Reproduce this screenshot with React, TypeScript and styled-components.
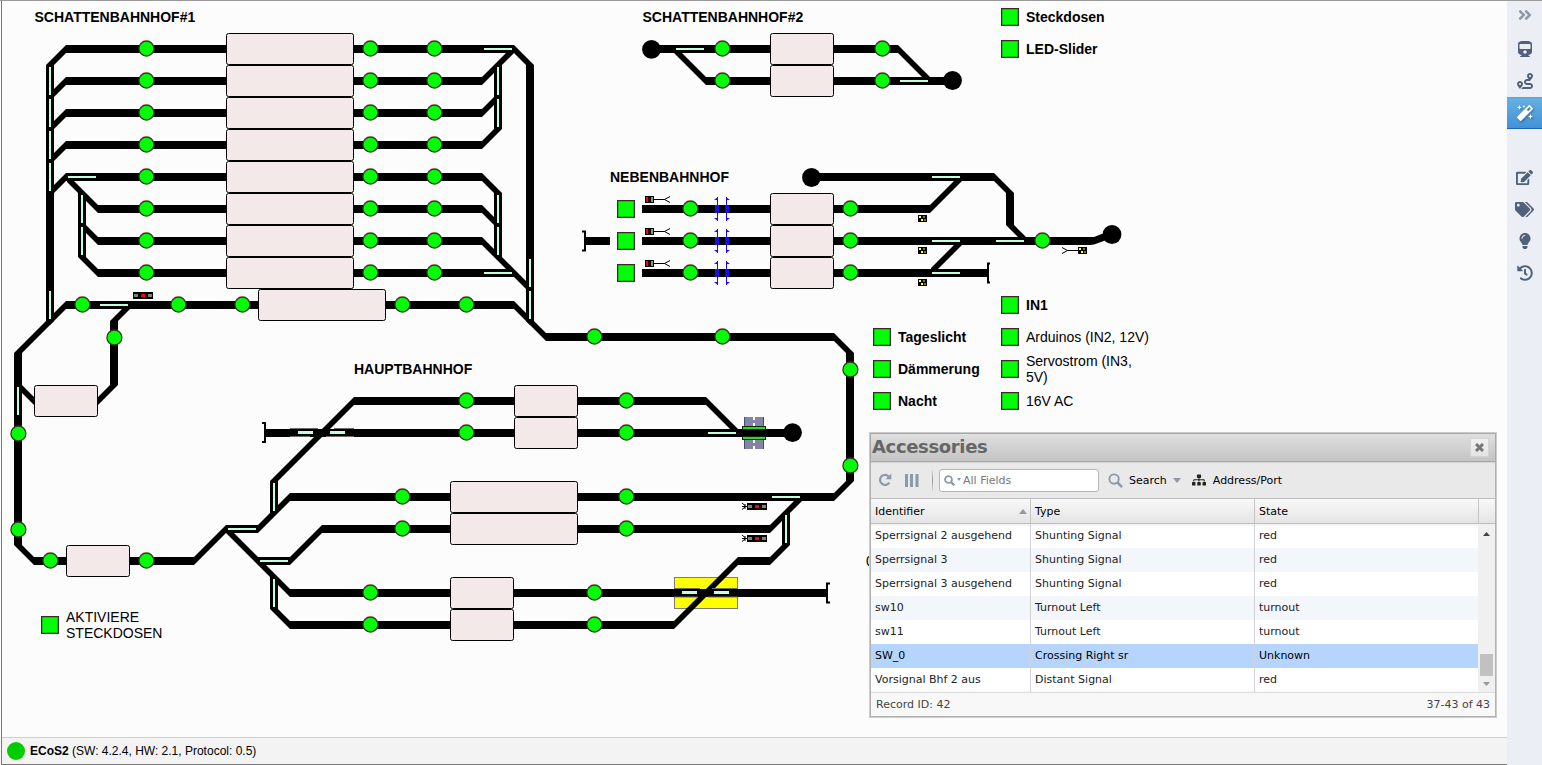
import React from "react";
import styled, { createGlobalStyle, css } from "styled-components";
import {
  FaAngleDoubleRight,
  FaTrain,
  FaRoute,
  FaMagic,
  FaEdit,
  FaTags,
  FaLightbulb,
  FaHistory,
  FaSitemap,
} from "react-icons/fa";

const GlobalStyle = createGlobalStyle`
  * { box-sizing: border-box; }
  body { margin: 0; background: #fff; overflow: hidden; }
`;

/* ---------- page frame ---------- */

const Page = styled.div`
  display: flex;
  width: 1542px;
  height: 765px;
  padding-left: 1px;
  border-top: 1px solid #9a9a9a;
  font-family: "Liberation Sans", Arial, sans-serif;
  color: #000;
`;

const Main = styled.main`
  display: flex;
  flex-direction: column;
  flex: 1;
  border-left: 1px solid #777;
  border-bottom: 1px solid #777;
`;

const Canvas = styled.section`
  position: relative;
  flex: 1;
  background: #fcfcfc;
  overflow: hidden;
`;

const StatusBar = styled.footer`
  display: flex;
  align-items: center;
  height: 27px;
  padding-left: 5px;
  gap: 5px;
  background: #f3f3f3;
  border-top: 1px solid #cfcfcf;
  font-size: 12px;
  white-space: pre;
`;

const StatusDot = styled.span`
  width: 18px;
  height: 18px;
  border-radius: 50%;
  background: #00cc00;
`;

const Sidebar = styled.nav`
  display: flex;
  flex-direction: column;
  width: 35px;
  background: #ebeef4;
`;

const SideButton = styled.button<{ $active?: boolean; $size?: number }>`
  display: flex;
  align-items: center;
  justify-content: center;
  height: 32px;
  padding: 0;
  border: 0;
  background: none;
  color: #4f627a;
  font-size: ${(p) => p.$size ?? 16}px;
  ${(p) =>
    p.$active &&
    css`
      color: #fff;
      background: linear-gradient(#66b0e3, #4292d6);
      border-bottom: 1px solid #1d63b5;
      border-top: 1px solid #5aa2d8;
      svg { filter: drop-shadow(1px 1px 1px rgba(0, 0, 0, 0.35)); }
    `}
`;

const SideToggle = styled(SideButton)`
  height: 28px;
  margin-bottom: 4px;
  color: #8d99a7;
`;

const SideGap = styled.div`
  height: 32px;
`;

/* ---------- layout canvas ---------- */

const Drawing = styled.svg`
  position: absolute;
  left: -2px;
  top: -1px;
`;

const Label = styled.span<{ $x: number; $y: number; $bold?: boolean; $ls?: number }>`
  position: absolute;
  left: ${(p) => p.$x - 2}px;
  top: ${(p) => p.$y - 1}px;
  font-size: 14px;
  line-height: 16px;
  letter-spacing: ${(p) => p.$ls ?? 0}px;
  font-weight: ${(p) => (p.$bold ? 700 : 400)};
  white-space: pre;
`;

const Switch = styled.button<{ $x: number; $y: number }>`
  position: absolute;
  left: ${(p) => p.$x - 2}px;
  top: ${(p) => p.$y - 1}px;
  width: 18px;
  height: 18px;
  padding: 0;
  border: 1px solid #3a2a2a;
  background: #00ff00;
  box-shadow: inset 0 0 0 0.5px #1c8a1c;
`;

type Pt = [number, number];

const TRACKS: Pt[][] = [
  // Schattenbahnhof 1, left ladder
  [[226, 49], [66, 49], [50, 65], [50, 321], [18, 353], [18, 545], [34, 561], [66, 561]],
  [[50, 97], [66, 81], [226, 81]],
  [[50, 129], [66, 113], [226, 113]],
  [[50, 161], [66, 145], [226, 145]],
  [[50, 193], [66, 177], [226, 177]],
  [[67, 178], [98, 209], [226, 209]],
  [[82, 225], [98, 241], [226, 241]],
  [[82, 193], [82, 257], [98, 273], [226, 273]],
  [[50, 321], [66, 305], [258, 305]],
  [[130, 305], [114, 321], [114, 385], [98, 401]],
  [[18, 385], [34, 401]],
  // right ladder and main loop
  [[354, 49], [514, 49], [530, 65], [530, 321], [546, 337], [834, 337], [850, 353], [850, 481], [834, 497], [578, 497]],
  [[354, 81], [482, 81], [514, 49]],
  [[354, 113], [482, 113], [498, 97]],
  [[354, 145], [482, 145], [498, 129], [498, 65]],
  [[354, 177], [482, 177], [498, 193], [498, 257]],
  [[354, 209], [482, 209], [498, 225]],
  [[354, 241], [482, 241], [530, 289]],
  [[354, 273], [514, 273]],
  [[386, 305], [514, 305], [530, 321]],
  // Hauptbahnhof
  [[130, 561], [194, 561], [226, 529], [258, 529], [290, 497], [450, 497]],
  [[274, 513], [274, 481], [354, 401], [514, 401]],
  [[226, 529], [290, 593], [450, 593]],
  [[258, 561], [290, 561], [322, 529], [450, 529]],
  [[274, 577], [274, 609], [290, 625], [450, 625]],
  [[266, 433], [514, 433]],
  [[578, 401], [706, 401], [738, 433]],
  [[578, 433], [786, 433]],
  [[578, 529], [770, 529], [802, 497]],
  [[786, 513], [786, 545], [770, 561], [738, 561], [674, 625], [514, 625]],
  [[514, 593], [827, 593]],
  // Schattenbahnhof 2
  [[651, 49], [770, 49]],
  [[674, 49], [706, 81], [770, 81]],
  [[834, 49], [898, 49], [930, 81]],
  [[834, 81], [952, 81]],
  // Nebenbahnhof
  [[811, 177], [994, 177], [1010, 193], [1010, 225], [1026, 241]],
  [[642, 209], [770, 209]],
  [[642, 241], [770, 241]],
  [[642, 273], [770, 273]],
  [[834, 209], [930, 209], [962, 177]],
  [[834, 241], [1091, 241]],
  [[834, 273], [987, 273]],
  [[931, 272], [962, 241]],
  [[585, 241], [610, 241]],
];

const W = 4;

/* Outline of one piece of track; diagonals are cut flush with the piece they meet. */
function pieces(pts: Pt[]): string {
  const isDiag = (i: number) =>
    i >= 0 && i < pts.length - 1 && pts[i][0] !== pts[i + 1][0] && pts[i][1] !== pts[i + 1][1];
  const isVert = (i: number) => i >= 0 && i < pts.length - 1 && pts[i][0] === pts[i + 1][0];
  let d = "";
  for (let i = 0; i < pts.length - 1; i++) {
    const [x1, y1] = pts[i];
    const [x2, y2] = pts[i + 1];
    if (isDiag(i)) {
      const s = (y2 - y1) / (x2 - x1) > 0 ? 1 : -1;
      const a: Pt = isVert(i - 1) ? [s * W, 0] : [0, -W];
      const b: Pt = isVert(i + 1) ? [s * W, 0] : [0, -W];
      d += `M${x1 + a[0]} ${y1 + a[1]}L${x2 + b[0]} ${y2 + b[1]}L${x2 - b[0]} ${y2 - b[1]}L${x1 - a[0]} ${y1 - a[1]}Z`;
    } else if (isVert(i)) {
      d += `M${x1 - W} ${y1}L${x1 + W} ${y1}L${x2 + W} ${y2}L${x2 - W} ${y2}Z`;
    } else {
      d += `M${x1} ${y1 - W}L${x2} ${y2 - W}L${x2} ${y2 + W}L${x1} ${y1 + W}Z`;
    }
  }
  return d;
}

/* Turnout indicators: upper left corners */
const H_BARS: Pt[] = [
  [484, 49], [68, 177], [100, 305], [484, 273], [228, 529], [260, 561], [676, 49], [900, 81],
  [932, 177], [932, 241], [932, 273], [996, 241], [708, 433], [772, 497],
];
const V_BARS: Pt[] = [
  [50, 67], [50, 99], [50, 131], [50, 163], [50, 291], [82, 195], [82, 227], [18, 387],
  [530, 259], [530, 291], [498, 67], [498, 99], [498, 195], [498, 227], [274, 483], [274, 579], [786, 515],
];

const ROWS8 = [0, 1, 2, 3, 4, 5, 6, 7];

const BLOCKS: [number, number, number][] = [
  ...ROWS8.map((k) => [226, 33 + 32 * k, 128] as [number, number, number]),
  [258, 289, 128], [34, 385, 64], [66, 545, 64], [514, 385, 64], [514, 417, 64],
  [450, 481, 128], [450, 513, 128], [450, 577, 64], [450, 609, 64],
  [770, 33, 64], [770, 65, 64], [770, 193, 64], [770, 225, 64], [770, 257, 64],
];

const SENSORS: Pt[] = [
  ...ROWS8.flatMap((k) => [146, 370, 434].map((x) => [x, 48 + 32 * k] as Pt)),
  [82, 304], [178, 304], [242, 304], [402, 304], [466, 304], [114, 337], [18, 433], [18, 529],
  [50, 560], [146, 560], [594, 336], [722, 336], [850, 369], [850, 465], [466, 400], [466, 432],
  [626, 400], [626, 432], [626, 496], [626, 528], [402, 496], [402, 528], [370, 592], [370, 624],
  [594, 592], [594, 624], [722, 48], [722, 80], [882, 48], [882, 80],
  ...[208, 240, 272].flatMap((y) => [[690, y], [850, y]] as Pt[]),
  [1042, 240],
];

const ENDS: Pt[] = [[651.5, 49.3], [952.5, 80.5], [811.5, 177.5], [1112, 234.5], [792.5, 432.6]];

const SWITCHES: Pt[] = [
  [1001, 8], [1001, 40], [1001, 296], [1001, 328], [1001, 360], [1001, 392],
  [873, 328], [873, 360], [873, 392], [617, 200], [617, 232], [617, 264], [41, 616],
];

const LABELS: { x: number; y: number; text: string; bold?: boolean; ls?: number }[] = [
  { x: 34.5, y: 9, text: "SCHATTENBAHNHOF#1", bold: true },
  { x: 642.5, y: 9, text: "SCHATTENBAHNHOF#2", bold: true },
  { x: 610, y: 169, text: "NEBENBAHNHOF", bold: true },
  { x: 354, y: 361, text: "HAUPTBAHNHOF", bold: true },
  { x: 1026, y: 9, text: "Steckdosen", bold: true },
  { x: 1026, y: 41, text: "LED-Slider", bold: true },
  { x: 1026, y: 297, text: "IN1", bold: true },
  { x: 898, y: 329, text: "Tageslicht", bold: true },
  { x: 898, y: 361, text: "Dämmerung", bold: true },
  { x: 898, y: 393, text: "Nacht", bold: true },
  { x: 1026, y: 329, text: "Arduinos (IN2, 12V)" },
  { x: 1026, y: 353, text: "Servostrom (IN3,\n5V)" },
  { x: 1026, y: 393, text: "16V AC" },
  { x: 66, y: 609, text: "AKTIVIERE\nSTECKDOSEN" },
  { x: 866, y: 553, text: "0" },
];

const ShuntSignal = ({ x, y, mast }: { x: number; y: number; mast?: boolean }) => (
  <g transform={`translate(${x} ${y})`} shapeRendering="crispEdges">
    <rect width="20" height="7" />
    <rect x="1" y="2" width="4" height="3" fill="#808080" />
    <rect x="8" y="2" width="4" height="3" fill="#ff0000" />
    <rect x="15" y="2" width="4" height="3" fill="#808080" />
    {mast && <path d="M-5 0l3 2.5M-5 6.5l3-2.5M-5 3.5H0M-2 1v5" stroke="#000" strokeWidth="1" fill="none" shapeRendering="auto" />}
  </g>
);

const MainSignal = ({ y }: { y: number }) => (
  <g transform={`translate(645 ${y})`}>
    <rect width="9" height="7" />
    <rect x="1" y="1" width="2" height="5" fill="#ff0000" />
    <rect x="6" y="1" width="2" height="5" fill="#909090" />
    <path d="M9 3.5H20M19.5 3.5L25 .5M19.5 3.5L25 6.5" stroke="#000" fill="none" />
  </g>
);

const DistantSignal = ({ x, y, mast }: { x: number; y: number; mast?: boolean }) => (
  <g transform={`translate(${x} ${y})`}>
    <rect width="9" height="7" />
    <rect x="1" y="1" width="2" height="2" fill="#ffff40" />
    <rect x="5" y="1" width="2" height="2" fill="#77773a" />
    <rect x="3" y="4" width="2" height="2" fill="#ffff40" />
    <rect x="6" y="4" width="2" height="2" fill="#77773a" />
    {mast && <path d="M0 3.5H-11M-10.5 3.5L-16 .5M-10.5 3.5L-16 6.5" stroke="#000" fill="none" />}
  </g>
);

const Decoupler = ({ y }: { y: number }) => (
  <g fill="#1c0ce8" transform={`translate(0 ${y})`}>
    <rect x="715" y="8" width="4" height="8" />
    <rect x="717" y="0" width="1" height="24" />
    <path d="M718 0v3h-4zM718 24v-3h-4z" />
    <rect x="725" y="8" width="4" height="8" />
    <rect x="726" y="0" width="1" height="24" />
    <path d="M726 0v3h4zM726 24v-3h4z" />
  </g>
);

const LevelCrossing = () => (
  <g>
    {[417, 440].map((y) => (
      <g key={y}>
        <rect x="744" y={y} width="20" height="9" fill="#8484a4" />
        <path d={`M744.5 ${y}v9M763.5 ${y}v9`} stroke="#4a4a78" />
        <path d={`M754 ${y}v3M754 ${y + 6}v3`} stroke="#fff" strokeWidth="2" />
      </g>
    ))}
    <rect x="742.5" y="426.5" width="23" height="3" fill="#35d035" stroke="#0c2a0c" />
    <rect x="742.5" y="436.5" width="23" height="3" fill="#35d035" stroke="#0c2a0c" />
  </g>
);

const TrackPlan = () => (
  <Drawing width="1507" height="737" viewBox="0 0 1507 737">
    <rect x="674.5" y="577.5" width="63" height="31" fill="#ffff00" stroke="#807880" />
    {TRACKS.map((t, i) => (
      <path key={i} d={pieces(t)} />
    ))}
    <path d="M1090 237L1094 237L1112 230V238L1094 244.500L1090 245Z" />
    <path d="M290 428.5H318M334 428.5H354M290 436.500H310M326 436.500H354M674 588.500H700M712 588.500H738M674 597H698M708 597H738" stroke="#6c6c6c" />
    <path d="M303 450L331 422L340 416L331 426L309 448L302 452Z" />
    <g fill="none" stroke="#000" strokeWidth="2">
      <path d="M262 423H265V442H262" />
      <path d="M582 231.500H585V250.500H582" />
      <path d="M990 263.500H988V282.500H990" />
      <path d="M830 583.500H827V602.500H830" />
    </g>
    <g fill="#bfffe0">
      {H_BARS.map(([x, y]) => (
        <rect key={`${x}-${y}`} x={x} y={y - 1} width="28" height="2" />
      ))}
      {V_BARS.map(([x, y]) => (
        <rect key={`${x}-${y}`} x={x - 1} y={y} width="2" height="28" />
      ))}
      <rect x="298" y="431" width="15" height="3" />
      <rect x="330" y="431" width="15" height="3" />
      <rect x="682" y="591" width="15" height="3" />
      <rect x="714" y="591" width="15" height="3" />
    </g>
    {BLOCKS.map(([x, y, w]) => (
      <rect key={`${x}-${y}`} x={x + 0.5} y={y + 0.5} width={w - 1} height="31" rx="2" fill="#f3e9e8" stroke="#000" />
    ))}
    {SENSORS.map(([x, y]) => (
      <circle key={`${x}-${y}`} cx={x + 0.4} cy={y + 0.5} r="7.5" fill="#00ff00" stroke="#3c3030" strokeWidth="1.3" />
    ))}
    {ENDS.map(([x, y]) => (
      <circle key={x} cx={x} cy={y} r="9.400" />
    ))}
    <ShuntSignal x={133} y={292} />
    <ShuntSignal x={747} y={503} mast />
    <ShuntSignal x={747} y={535} mast />
    {[0, 32, 64].map((o) => (
      <React.Fragment key={o}>
        <MainSignal y={196 + o} />
        <Decoupler y={197 + o} />
        <DistantSignal x={918} y={215 + o} />
      </React.Fragment>
    ))}
    <DistantSignal x={1078} y={247} mast />
    <LevelCrossing />
  </Drawing>
);

/* ---------- accessories window ---------- */

const Window = styled.section`
  position: absolute;
  left: 867px;
  top: 431px;
  width: 628px;
  height: 286px;
  display: flex;
  flex-direction: column;
  border: 1px solid #cbcbcb;
  background: #e9e9e9;
  box-shadow: inset 0 0 0 1px #b2b2b2;
  padding: 0 1px 1px;
  font-family: "DejaVu Sans", Verdana, sans-serif;
  font-size: 11px;
`;

const TitleBar = styled.header`
  display: flex;
  align-items: center;
  justify-content: space-between;
  height: 29px;
  margin: 0 -1px;
  padding: 0 6px 0 1px;
  border: 1px solid #a9a9a9;
  border-bottom-width: 1.500px;
  background: linear-gradient(#dfdfdf, #c4c4c4);
`;

const Title = styled.h1`
  margin: 0;
  font-size: 18px;
  line-height: 24px;
  letter-spacing: -0.35px;
  color: #666;
`;

const CloseButton = styled.button`
  display: flex;
  align-items: center;
  justify-content: center;
  width: 19px;
  height: 19px;
  padding: 0;
  border: 1px solid #d4d4d4;
  background: linear-gradient(#f0f0f0, #e4e4e4);
`;

const Toolbar = styled.div`
  display: flex;
  align-items: center;
  height: 38px;
  padding: 0 7px;
  border-top: 1px solid #d4d4d4;
  border-bottom: 1px solid #bdbdbd;
`;

const ToolIcon = styled.svg<{ $ml?: number }>`
  flex: none;
  margin-left: ${(p) => p.$ml ?? 0}px;
  overflow: visible;
`;

const Divider = styled.i`
  width: 1px;
  height: 21px;
  margin: 0 6px 0 13px;
  background: linear-gradient(#d8d8d8, #999, #d8d8d8);
`;

const SearchField = styled.div`
  display: flex;
  align-items: center;
  width: 160px;
  height: 23px;
  padding-left: 4px;
  gap: 2px;
  border: 1px solid #b5b5b5;
  border-radius: 3px;
  background: #fff;
  color: #777;
`;

const ToolText = styled.span<{ $ml: number; $ls?: number }>`
  margin-left: ${(p) => p.$ml}px;
  letter-spacing: ${(p) => p.$ls ?? 0}px;
  color: #000;
  svg { display: block; }
`;

const HeadRow = styled.div`
  display: grid;
  grid-template-columns: 160px 224px 224px 16px;
  height: 26px;
  background: linear-gradient(#f9f9f9, #e4e4e4);
  border-bottom: 1px solid #bdbdbd;
`;

const HeadCell = styled.div`
  display: flex;
  align-items: center;
  justify-content: space-between;
  padding: 0 3px 0 4px;
  border-right: 1px solid #c5c5c5;
  &:last-child { border-right: 0; }
`;

const Body = styled.div`
  display: flex;
  height: 168px;
`;

const Rows = styled.div`
  width: 607px;
  box-shadow: inset 0 4px 4px -3px #d8d8d8;
`;

const Row = styled.div<{ $tone: "even" | "odd" | "selected" }>`
  display: grid;
  grid-template-columns: 160px 224px 223px;
  height: 24px;
  color: ${(p) => (p.$tone === "selected" ? "#000" : "#222")};
  background: ${(p) => ({ odd: "#fff", even: "#f3f6fb", selected: "#b5d5ff" })[p.$tone]};
  &:first-child { background: linear-gradient(#f1f1f1, #fff 4px); }
  &:last-child { background: linear-gradient(#fff 20px, #f8f8f8); }
`;

const Cell = styled.div`
  padding-left: 4px;
  line-height: 24px;
  white-space: nowrap;
  border-right: 1px solid #d2d2d6;
  &:last-child { border-right: 0; }
`;

const ScrollBar = styled.div`
  display: flex;
  flex-direction: column;
  align-items: center;
  width: 17px;
  padding: 8px 0 6px;
  background: #f0f0f0;
`;

const Thumb = styled.div`
  width: 13px;
  height: 22px;
  margin: auto 0 6px;
  background: #c1c1c1;
`;

const WindowFooter = styled.footer`
  display: flex;
  align-items: center;
  justify-content: space-between;
  height: 24px;
  padding: 0 5px;
  border-top: 1px solid #dcdcdc;
  background: #f8f8f8;
  color: #444;
`;

const RECORDS: [string, string, string][] = [
  ["Sperrsignal 2 ausgehend", "Shunting Signal", "red"],
  ["Sperrsignal 3", "Shunting Signal", "red"],
  ["Sperrsignal 3 ausgehend", "Shunting Signal", "red"],
  ["sw10", "Turnout Left", "turnout"],
  ["sw11", "Turnout Left", "turnout"],
  ["SW_0", "Crossing Right sr", "Unknown"],
  ["Vorsignal Bhf 2 aus", "Distant Signal", "red"],
];

const Magnifier = ({ size, width }: { size: number; width: number }) => (
  <ToolIcon width={size} height={size} viewBox="0 0 16 16" fill="none" stroke="#8d99a7" strokeWidth={width}>
    <circle cx="6.500" cy="6.500" r="5" />
    <path d="M10.200 10.200L15 15" strokeWidth={width * 1.3} />
  </ToolIcon>
);

const AccessoriesWindow = () => (
  <Window>
    <TitleBar>
      <Title>Accessories</Title>
      <CloseButton>
        <svg width="9" height="9" viewBox="0 0 9 9" stroke="#777" strokeWidth="3">
          <path d="M1 1L8 8M8 1L1 8" />
        </svg>
      </CloseButton>
    </TitleBar>
    <Toolbar>
      <ToolIcon width="14" height="14" viewBox="0 0 14 14">
        <path d="M11.300 9.600A5 5 0 1 1 10.700 3.500" fill="none" stroke="#8d99a7" strokeWidth="2.200" />
        <path d="M13.300 .5V6.300H7.500Z" fill="#8d99a7" />
      </ToolIcon>
      <ToolIcon $ml={13} width="14" height="13" viewBox="0 0 14 13" fill="#8d99a7">
        <path d="M0 0h3v13H0zM5 0h3v13H5zM10.500 0h3v13h-3z" />
      </ToolIcon>
      <Divider />
      <SearchField>
        <Magnifier size={11} width={2.600} />
        <svg width="4" height="4" viewBox="0 0 4 4"><path d="M0 0h4L2 3z" fill="#8d99a7" /></svg>
        <span>All Fields</span>
      </SearchField>
      <ToolText $ml={9}><Magnifier size={15} width={2} /></ToolText>
      <ToolText $ml={6}>Search</ToolText>
      <ToolText $ml={6}>
        <svg width="8" height="5" viewBox="0 0 8 5"><path d="M0 0h8L4 5z" fill="#8d99a7" /></svg>
      </ToolText>
      <ToolText $ml={11}><FaSitemap size={14} color="#222" /></ToolText>
      <ToolText $ml={7}>Address/Port</ToolText>
    </Toolbar>
    <HeadRow>
      <HeadCell>
        Identifier
        <svg width="8" height="5" viewBox="0 0 8 5"><path d="M0 5h8L4 0z" fill="#8d99a7" /></svg>
      </HeadCell>
      <HeadCell>Type</HeadCell>
      <HeadCell>State</HeadCell>
      <HeadCell />
    </HeadRow>
    <Body>
      <Rows>
        {RECORDS.map((r, i) => (
          <Row key={r[0]} $tone={i === 5 ? "selected" : i % 2 ? "even" : "odd"}>
            {r.map((c, j) => (
              <Cell key={j}>{c}</Cell>
            ))}
          </Row>
        ))}
      </Rows>
      <ScrollBar>
        <svg width="7" height="4" viewBox="0 0 7 4"><path d="M0 4h7L3.500 0z" fill="#444" /></svg>
        <Thumb />
        <svg width="7" height="4" viewBox="0 0 7 4"><path d="M0 0h7L3.500 4z" fill="#999" /></svg>
      </ScrollBar>
    </Body>
    <WindowFooter>
      <span>Record ID: 42</span>
      <span>37-43 of 43</span>
    </WindowFooter>
  </Window>
);

export default function App() {
  return (
    <>
      <GlobalStyle />
      <Page>
        <Main>
          <Canvas>
            <TrackPlan />
            {SWITCHES.map(([x, y]) => (
              <Switch key={`${x}-${y}`} $x={x} $y={y} />
            ))}
            {LABELS.map((l) => (
              <Label key={l.text} $x={l.x} $y={l.y} $bold={l.bold} $ls={l.ls}>
                {l.text}
              </Label>
            ))}
            <AccessoriesWindow />
          </Canvas>
          <StatusBar>
            <StatusDot />
            <span>
              <b>ECoS2</b> (SW: 4.2.4, HW: 2.1, Protocol: 0.5)
            </span>
          </StatusBar>
        </Main>
        <Sidebar>
          <SideToggle $size={16}><FaAngleDoubleRight /></SideToggle>
          <SideButton><FaTrain /></SideButton>
          <SideButton><FaRoute /></SideButton>
          <SideButton $active><FaMagic /></SideButton>
          <SideGap />
          <SideButton $size={17}><FaEdit /></SideButton>
          <SideButton $size={19}><FaTags /></SideButton>
          <SideButton><FaLightbulb /></SideButton>
          <SideButton><FaHistory /></SideButton>
        </Sidebar>
      </Page>
    </>
  );
}
